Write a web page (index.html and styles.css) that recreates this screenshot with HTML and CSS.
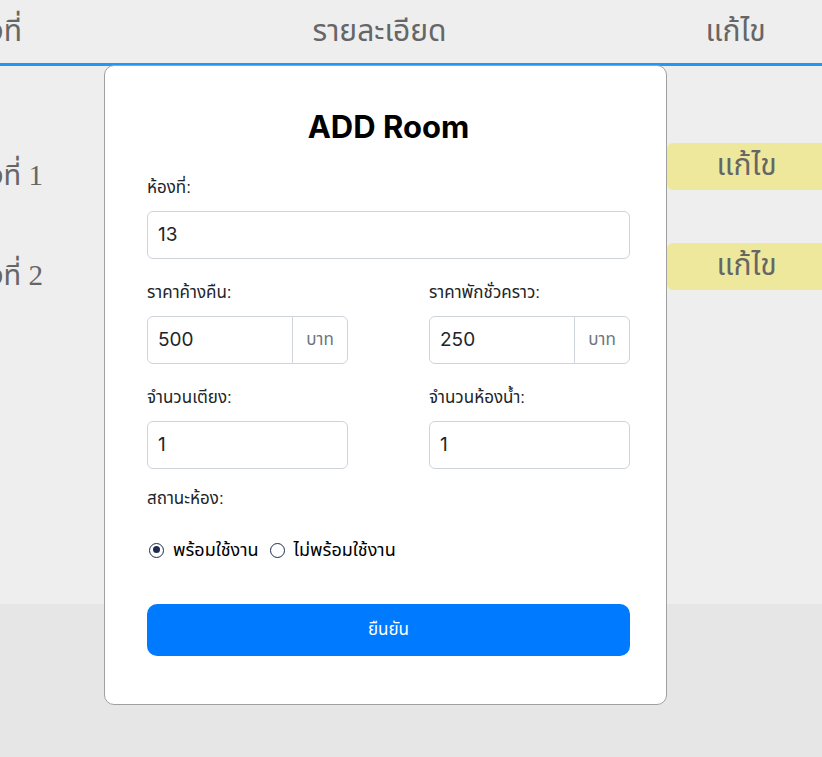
FILE: index.html
```html
<!DOCTYPE html>
<html lang="th">
<head>
<meta charset="utf-8">
<title>Rooms</title>
<link rel="stylesheet" href="styles.css">
</head>
<body>
<div class="page">
  <div class="table">
    <div class="thead">
      <div class="cell c1"><span>ห้องที่</span></div>
      <div class="cell c2">รายละเอียด</div>
      <div class="cell c3">แก้ไข</div>
    </div>
    <div class="tbody">
      <div class="row">
        <div class="cell c1 num"><span>ห้องที่ 1</span></div>
        <div class="cell c2"></div>
        <div class="cell c3"><button class="edit">แก้ไข</button></div>
      </div>
      <div class="row">
        <div class="cell c1 num"><span>ห้องที่ 2</span></div>
        <div class="cell c2"></div>
        <div class="cell c3"><button class="edit">แก้ไข</button></div>
      </div>
    </div>
  </div>

  <div class="modal">
    <h2 class="title">ADD Room</h2>
    <div class="group">
      <label class="label">ห้องที่:</label>
      <div class="input">13</div>
    </div>
    <div class="cols">
      <div class="group">
        <label class="label">ราคาค้างคืน:</label>
        <div class="igroup"><div class="input joined">500</div><div class="addon">บาท</div></div>
      </div>
      <div class="group">
        <label class="label">ราคาพักชั่วคราว:</label>
        <div class="igroup"><div class="input joined">250</div><div class="addon">บาท</div></div>
      </div>
      <div class="group">
        <label class="label">จำนวนเตียง:</label>
        <div class="input">1</div>
      </div>
      <div class="group">
        <label class="label">จำนวนห้องน้ำ:</label>
        <div class="input">1</div>
      </div>
    </div>
    <div class="group status">
      <label class="label">สถานะห้อง:</label>
    </div>
    <div class="radios">
      <span class="radio checked"></span><span class="rtext">พร้อมใช้งาน</span>
      <span class="radio"></span><span class="rtext">ไม่พร้อมใช้งาน</span>
    </div>
    <button class="submit">ยืนยัน</button>
  </div>
</div>
</body>
</html>
```

FILE: styles.css
```css
* { box-sizing: border-box; }
html, body { margin: 0; padding: 0; }
body {
  background: #e6e6e6;
  font-family: "Liberation Serif", "Noto Sans Thai", "Noto Serif Thai", "Loma", "Garuda", serif;
  width: 822px;
  height: 757px;
  overflow: hidden;
}
.page { position: relative; width: 822px; height: 757px; }

.table { background: #eeeeee; }
.thead, .row {
  display: grid;
  grid-template-columns: 92px 1fr 155px;
}
.thead {
  height: 66px;
  border-bottom: 3px solid #2196f3;
  align-items: center;
}
.cell { color: #666; font-size: 30px; text-align: center; }
.thead .c1 { display: flex; justify-content: flex-end; overflow: hidden; padding-right: 70px; }
.thead .c3 { padding-right: 18px; }
.tbody { height: 538px; padding-top: 50px; }
.row { height: 100px; align-items: center; }
.row .c1 {
  display: flex;
  justify-content: flex-end;
  overflow: hidden;
  white-space: nowrap;
  padding-right: 49px;
  padding-top: 20px;
  font-size: 29px;
}
.row .c1 span, .thead .c1 span { white-space: nowrap; flex-shrink: 0; }
.row .c3 { height: 100%; display: flex; align-items: center; }
.edit {
  border: 0;
  margin: 0;
  width: 155px;
  height: 47px;
  background: #eee89d;
  color: #666;
  border-radius: 6px 0 0 6px;
  font-family: inherit;
  font-size: 30px;
  padding: 0 0 0 4px;
  text-align: center;
}

.modal {
  position: absolute;
  left: 104px;
  top: 65px;
  width: 563px;
  height: 640px;
  background: #fff;
  border: 1px solid #a0a0a0;
  border-radius: 10px;
  padding: 44px 36px 0 42px;
  font-family: "Liberation Sans", "Noto Sans Thai", "Loma", "Garuda", sans-serif;
  color: #212529;
}
.title {
  margin: 0 0 32px;
  text-align: center;
  font-family: "Inter", "Liberation Sans", sans-serif;
  font-weight: 700;
  font-size: 31px;
  line-height: 34px;
  color: #000;
}
.group { margin-bottom: 22px; }
.label {
  display: block;
  font-size: 17px;
  line-height: 24px;
  margin-bottom: 11px;
  color: #212529;
}
.input {
  height: 48px;
  border: 1px solid #ced4da;
  border-radius: 6px;
  font-size: 19px;
  line-height: 46px;
  padding: 0 10px;
  color: #212529;
  font-family: "Inter", "Liberation Sans", sans-serif;
}
.cols {
  display: grid;
  grid-template-columns: 1fr 1fr;
  column-gap: 81px;
}
.igroup { display: flex; }
.igroup .joined { flex: 1; border-radius: 6px 0 0 6px; }
.addon {
  width: 56px;
  height: 48px;
  border: 1px solid #ced4da;
  border-left-width: 1px;
  margin-left: -1px;
  border-radius: 0 6px 6px 0;
  font-size: 17px;
  line-height: 46px;
  text-align: center;
  color: #6c757d;
}
.status { margin-top: -4px; margin-bottom: 0; }
.radios {
  display: flex;
  align-items: center;
  margin-top: 27px;
  height: 24px;
  font-size: 18px;
  color: #000;
}
.radio {
  width: 15px;
  height: 15px;
  border: 1.5px solid #1d2b4f;
  border-radius: 50%;
  margin-left: 2px;
  margin-right: 9px;
  position: relative;
}
.radio.checked::after {
  content: "";
  position: absolute;
  left: 2.5px; top: 2.5px;
  width: 7px; height: 7px;
  border-radius: 50%;
  background: #1d2b4f;
}
.rtext { margin-right: 9px; }
.submit {
  display: block;
  width: 100%;
  margin-top: 42px;
  height: 52px;
  border: 0;
  border-radius: 10px;
  background: #007bff;
  color: #fff;
  font-family: inherit;
  font-size: 17px;
}
```
